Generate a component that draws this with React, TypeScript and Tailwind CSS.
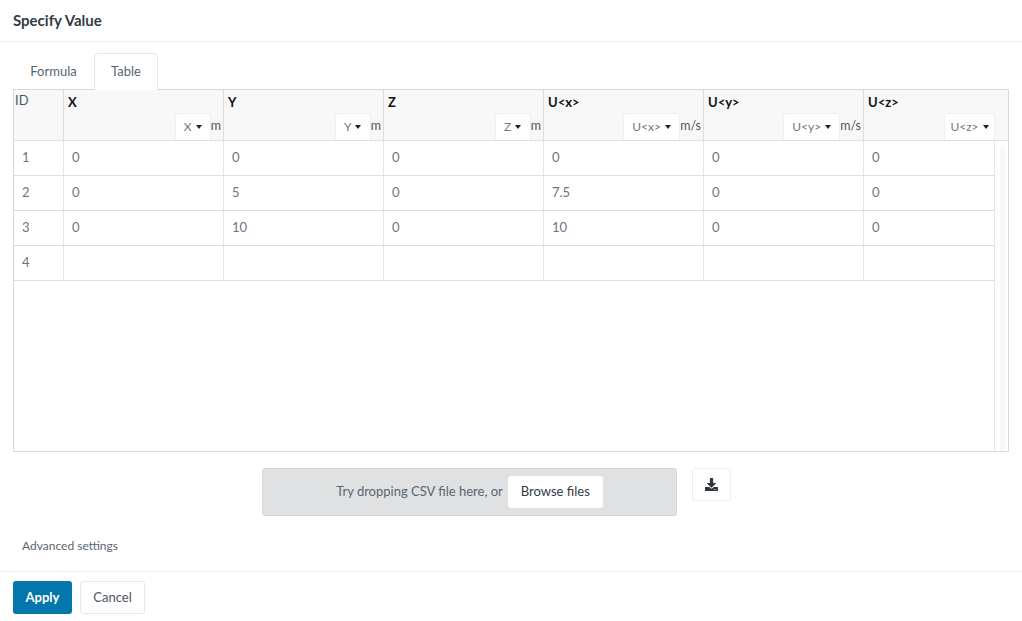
import { FaDownload } from 'react-icons/fa';

const columnas = [
  { nombre: 'X', unidad: 'm', ancho: 'w-[36px]' },
  { nombre: 'Y', unidad: 'm', ancho: 'w-[36px]' },
  { nombre: 'Z', unidad: 'm', ancho: 'w-[36px]' },
  { nombre: 'U<x>', unidad: 'm/s', ancho: 'w-[57px]' },
  { nombre: 'U<y>', unidad: 'm/s', ancho: 'w-[57px]' },
  { nombre: 'U<z>', unidad: '', ancho: 'w-[51px]' },
];

const filas = [
  ['1', '0', '0', '0', '0', '0', '0'],
  ['2', '0', '5', '0', '7.5', '0', '0'],
  ['3', '0', '10', '0', '10', '0', '0'],
  ['4', '', '', '', '', '', ''],
];

function Caret() {
  return <span className="ml-[4px] inline-block h-0 w-0 border-x-[3.5px] border-t-[4px] border-x-transparent border-t-[#222]" />;
}

/** Cabecera de columna: nombre arriba, selector y unidad abajo a la derecha. */
function CabeceraColumna({ col, ultima }: { col: (typeof columnas)[number]; ultima: boolean }) {
  return (
    <div className={`flex flex-col justify-between ${ultima ? 'w-[131px]' : 'w-[160px] border-r border-[#dddddd]'}`}>
      <div className="pl-[4px] pt-[3px] text-[13px] leading-[18px] font-bold text-[#111]">{col.nombre}</div>
      <div className="flex items-end justify-end">
        <div className={`flex h-[27px] items-center justify-center rounded-t-[3px] border border-b-0 border-[#f0f0f0] bg-white text-[12px] text-[#777] ${col.ancho}`}>
          {col.nombre}
          <Caret />
        </div>
        {col.unidad ? <span className="mb-[5px] pr-[2px] text-[12.5px] leading-[18px] text-[#555]">{col.unidad}</span> : null}
      </div>
    </div>
  );
}

export default function App() {
  return (
    <div className="flex h-[621px] w-[1022px] flex-col overflow-hidden bg-white font-['Lato',sans-serif] text-[#4a5560]">
      <header className="flex h-[42px] shrink-0 items-center border-b border-[#eeeeee] pl-[13px]">
        <h1 className="text-[15px] font-bold text-[#333c46]">Specify Value</h1>
      </header>

      <div className="flex flex-1 flex-col px-[13px] pt-[11px]">
        {/* Pestañas */}
        <div className="relative z-10 -mb-px flex h-[37px] text-[13px]">
          <div className="flex w-[81px] items-center justify-center text-[#596570]">Formula</div>
          <div className="flex w-[64px] items-center justify-center rounded-t-[5px] border border-b-0 border-[#e6e6e6] bg-white text-[#596570]">Table</div>
        </div>

        {/* Tabla */}
        <div className="h-[363px] w-[996px] border border-[#d9d9d9]">
          <div className="flex h-[51px] border-b border-[#e0e0e0] bg-[#f8f8f8]">
            <div className="w-[50px] border-r border-[#dddddd] pl-[1px] pt-[1px] text-[13px] leading-[18px] text-[#4a5560]">ID</div>
            {columnas.map((col, i) => (
              <CabeceraColumna key={col.nombre} col={col} ultima={i === columnas.length - 1} />
            ))}
          </div>
          <div className="flex h-[310px]">
            <div className="w-[981px] border-r border-[#e5e5e5]">
              {filas.map((fila) => (
                <div key={fila[0]} className="flex h-[35px] border-b border-[#dedede] text-[13px] text-[#6b7580]">
                  {fila.map((valor, j) => (
                    <div
                      key={j}
                      className={`flex items-center pl-[8px] ${j === 0 ? 'w-[50px] border-r border-[#e5e5e5]' : j === 6 ? 'w-[130px]' : 'w-[160px] border-r border-[#e5e5e5]'}`}
                    >
                      {valor}
                    </div>
                  ))}
                </div>
              ))}
            </div>
            <div className="ml-[5px] mt-[4px] w-[5px] bg-[#f8f8f8]" />
          </div>
        </div>

        {/* Carga de CSV */}
        <div className="mt-[16px] flex items-start">
          <div className="ml-[249px] flex h-[48px] w-[415px] items-center justify-center rounded-[3px] border border-[#d4d6d8] bg-[#e0e1e3]">
            <span className="text-[13px] text-[#596570]">Try dropping CSV file here, or</span>
            <button className="ml-[5px] h-[32px] w-[95px] rounded-[3px] bg-white text-[13px] text-[#333c46]">Browse files</button>
          </div>
          <button className="ml-[15px] flex h-[33px] w-[39px] items-center justify-center rounded-[3px] border border-[#eeeeee] bg-white">
            <FaDownload size={13} className="text-[#2b3640]" />
          </button>
        </div>

        <div className="mt-[21px] pl-[9px] text-[12px] leading-[18px] text-[#596570]">Advanced settings</div>
      </div>

      <footer className="flex h-[50px] shrink-0 items-start gap-[8px] border-t border-[#eeeeee] pl-[13px] pt-[9px]">
        <button className="h-[33px] w-[59px] rounded-[3px] bg-[#0376ab] text-[13px] font-bold text-white">Apply</button>
        <button className="h-[33px] w-[65px] rounded-[3px] border border-[#e8e8e8] bg-white text-[13px] text-[#4a5560]">Cancel</button>
      </footer>
    </div>
  );
}
